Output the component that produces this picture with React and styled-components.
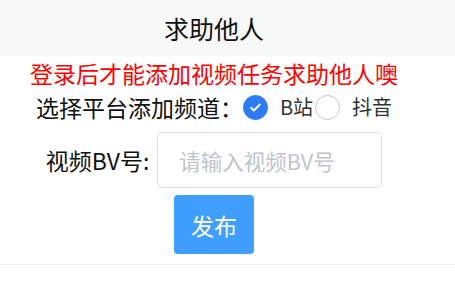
import React, { useState } from 'react'
import styled, { createGlobalStyle } from 'styled-components'

const GlobalStyle = createGlobalStyle`
    body {
        margin: 0;
        background: #ffffff;
        font-family: "Noto Sans CJK SC", "Noto Sans", sans-serif;
    }
`;

function RoundCheck({ checked, label, onClick }) {
    return (
        <CheckItem onClick={onClick}>
            <CheckIcon checked={checked}>
                {checked && (
                    <svg width="13" height="13" viewBox="0 0 24 24" fill="none">
                        <path d="M4 12.5l5 5L20 6.5" stroke="#fff" strokeWidth="3.4" strokeLinecap="round" strokeLinejoin="round" />
                    </svg>
                )}
            </CheckIcon>
            <CheckLabel>{label}</CheckLabel>
        </CheckItem>
    )
}

function App() {
    const [platform, setPlatform] = useState('bili')

    return (
        <PageStyled>
            <GlobalStyle />
            <Header>求助他人</Header>
            <Content>
                <Notice>登录后才能添加视频任务求助他人噢</Notice>
                <ChannelRow>
                    <RowLabel>选择平台添加频道：</RowLabel>
                    <CheckGroup>
                        <RoundCheck checked={platform === 'bili'} label="B站" onClick={() => setPlatform('bili')} />
                        <RoundCheck checked={platform === 'douyin'} label="抖音" onClick={() => setPlatform('douyin')} />
                    </CheckGroup>
                </ChannelRow>
                <FieldRow>
                    <RowLabel>视频BV号:</RowLabel>
                    <TextInput placeholder="请输入视频BV号" />
                </FieldRow>
                <PrimaryButton>发布</PrimaryButton>
            </Content>
            <Divider />
        </PageStyled>
    )
}

const PageStyled = styled.div`
    width: 455px;
    color: #000;
`;

const Header = styled.div`
    height: 56px;
    background: #f8f8f8;
    display: flex;
    align-items: center;
    justify-content: center;
    padding-right: 27px;
    font-size: 25px;
    color: #111;
`;

const Content = styled.div`
    display: flex;
    flex-direction: column;
    align-items: center;
    padding-right: 27px;
`;

const Notice = styled.div`
    margin-top: 5px;
    font-size: 23px;
    line-height: 24px;
    color: #ff0000;
`;

const ChannelRow = styled.div`
    display: flex;
    align-items: center;
    margin-top: 9px;
    height: 26px;
`;

const RowLabel = styled.span`
    font-size: 23px;
    line-height: 24px;
    color: #111;
    white-space: nowrap;
`;

const CheckGroup = styled.div`
    display: flex;
    align-items: center;
    gap: 2px;
`;

const CheckItem = styled.label`
    display: flex;
    align-items: center;
    cursor: pointer;
`;

const CheckIcon = styled.span`
    width: 25px;
    height: 25px;
    box-sizing: border-box;
    border-radius: 50%;
    display: flex;
    align-items: center;
    justify-content: center;
    background: ${p => p.checked ? '#2f7bf5' : '#fff'};
    border: 1px solid ${p => p.checked ? '#2f7bf5' : '#c8c9cc'};
`;

const CheckLabel = styled.span`
    margin-left: 12px;
    font-size: 20px;
    line-height: 24px;
    color: #323233;
`;

const FieldRow = styled.div`
    display: flex;
    align-items: center;
    gap: 8px;
    margin-top: 12px;
`;

const TextInput = styled.input`
    width: 225px;
    height: 56px;
    box-sizing: border-box;
    border: 1px solid #dcdfe6;
    border-radius: 5px;
    padding: 0 21px;
    font-family: inherit;
    font-size: 21.5px;
    color: #606266;
    outline: none;
    &::placeholder {
        color: #c0c4cc;
    }
`;

const PrimaryButton = styled.button`
    margin-top: 7px;
    width: 80px;
    height: 59px;
    border: none;
    border-radius: 4px;
    background: #409eff;
    color: #fff;
    font-family: inherit;
    font-size: 23px;
    cursor: pointer;
`;

const Divider = styled.div`
    margin-top: 10px;
    border-top: 1px solid #eeeeee;
`;

export default App
